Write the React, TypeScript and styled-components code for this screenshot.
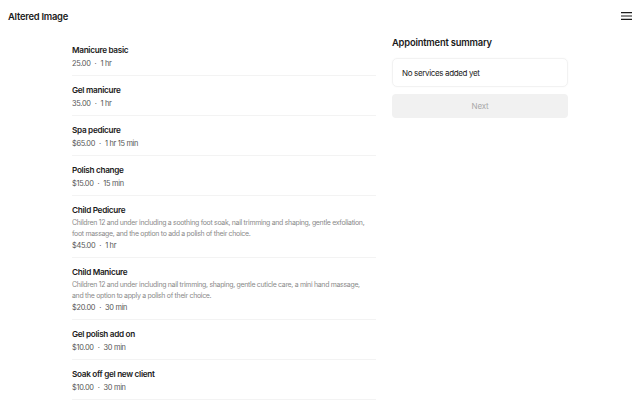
import styled, {createGlobalStyle} from "styled-components";

const GlobalStyle = createGlobalStyle`
  html, body {
    margin: 0;
    padding: 0;
    background: #ffffff;
    font-family: Inter, "Liberation Sans", sans-serif;
    color: #1a1a1a;
  }
`

const TopBar = styled.header`
  height: 32px;
  padding: 0 8px;
  display: flex;
  align-items: center;
  justify-content: space-between;
`
const Brand = styled.h1`
  margin: 0;
  font-size: 9.4px;
  font-weight: 600;
  letter-spacing: -0.25px;
`
const MenuButton = styled.button`
  width: 11px;
  height: 12px;
  padding: 0;
  border: none;
  background: none;
  display: flex;
  align-items: center;
  justify-content: center;
`
const Main = styled.main`
  max-width: 496px;
  margin: 0 auto;
  padding-top: 4px;
  display: grid;
  grid-template-columns: 304px 176px;
  column-gap: 16px;
  align-items: start;
`
const ServiceList = styled.ul`
  list-style: none;
  margin: 0;
  padding: 0;
`
const Service = styled.li`
  padding: 8px 0 5px;
  border-bottom: 1px solid #f3f3f3;
  display: flex;
  flex-direction: column;
`
const ServiceName = styled.span`
  font-size: 8.2px;
  font-weight: 600;
  line-height: 13px;
  letter-spacing: -0.3px;
`
const Description = styled.p`
  margin: 0;
  max-width: 296px;
  font-size: 6.95px;
  line-height: 11px;
  color: #8a8a8a;
  letter-spacing: -0.3px;
`
const Meta = styled.span`
  font-size: 7.4px;
  line-height: 13px;
  color: #555555;
  letter-spacing: -0.3px;
`
const Dot = styled.span`
  margin: 0 4px;
`
const Summary = styled.aside`
  display: flex;
  flex-direction: column;
`
const SummaryTitle = styled.h2`
  margin: 0 0 8px;
  font-size: 9.4px;
  font-weight: 600;
  line-height: 14px;
  letter-spacing: -0.2px;
`
const SummaryBox = styled.div`
  height: 27px;
  padding: 0 9px;
  display: flex;
  align-items: center;
  border: 1px solid #f2f2f2;
  border-radius: 5px;
  box-shadow: 0 0 2px rgba(0, 0, 0, 0.04);
  font-size: 8px;
  letter-spacing: -0.35px;
`
const NextButton = styled.button`
  margin-top: 7px;
  height: 24px;
  border: none;
  border-radius: 4px;
  background: #f1f1f1;
  color: #a8a8a8;
  font-family: inherit;
  font-size: 8px;
  letter-spacing: -0.2px;
`

interface IService {
    name: string,
    price: string,
    duration: string,
    description?: string
}

const services: IService[] = [
    {name: "Manicure basic", price: "25.00", duration: "1 hr"},
    {name: "Gel manicure", price: "35.00", duration: "1 hr"},
    {name: "Spa pedicure", price: "$65.00", duration: "1 hr 15 min"},
    {name: "Polish change", price: "$15.00", duration: "15 min"},
    {
        name: "Child Pedicure",
        price: "$45.00",
        duration: "1 hr",
        description: "Children 12 and under including a soothing foot soak, nail trimming and shaping, gentle exfoliation, foot massage, and the option to add a polish of their choice."
    },
    {
        name: "Child Manicure",
        price: "$20.00",
        duration: "30 min",
        description: "Children 12 and under including nail trimming, shaping, gentle cuticle care, a mini hand massage, and the option to apply a polish of their choice."
    },
    {name: "Gel polish add on", price: "$10.00", duration: "30 min"},
    {name: "Soak off gel new client", price: "$10.00", duration: "30 min"},
]

const App = () => {
    return (
        <>
            <GlobalStyle/>
            <TopBar>
                <Brand>Altered Image</Brand>
                <MenuButton aria-label="Menu">
                    <svg width="11" height="8" viewBox="0 0 11 8">
                        <path d="M0 0.7h11M0 4h11M0 7.3h11" stroke="#1a1a1a" strokeWidth="1.2"/>
                    </svg>
                </MenuButton>
            </TopBar>
            <Main>
                <ServiceList>
                    {
                        services.map((s) => (
                            <Service key={s.name}>
                                <ServiceName>{s.name}</ServiceName>
                                {s.description && <Description>{s.description}</Description>}
                                <Meta>{s.price}<Dot>·</Dot>{s.duration}</Meta>
                            </Service>
                        ))
                    }
                </ServiceList>
                <Summary>
                    <SummaryTitle>Appointment summary</SummaryTitle>
                    <SummaryBox>No services added yet</SummaryBox>
                    <NextButton disabled>Next</NextButton>
                </Summary>
            </Main>
        </>
    )
}

export default App
